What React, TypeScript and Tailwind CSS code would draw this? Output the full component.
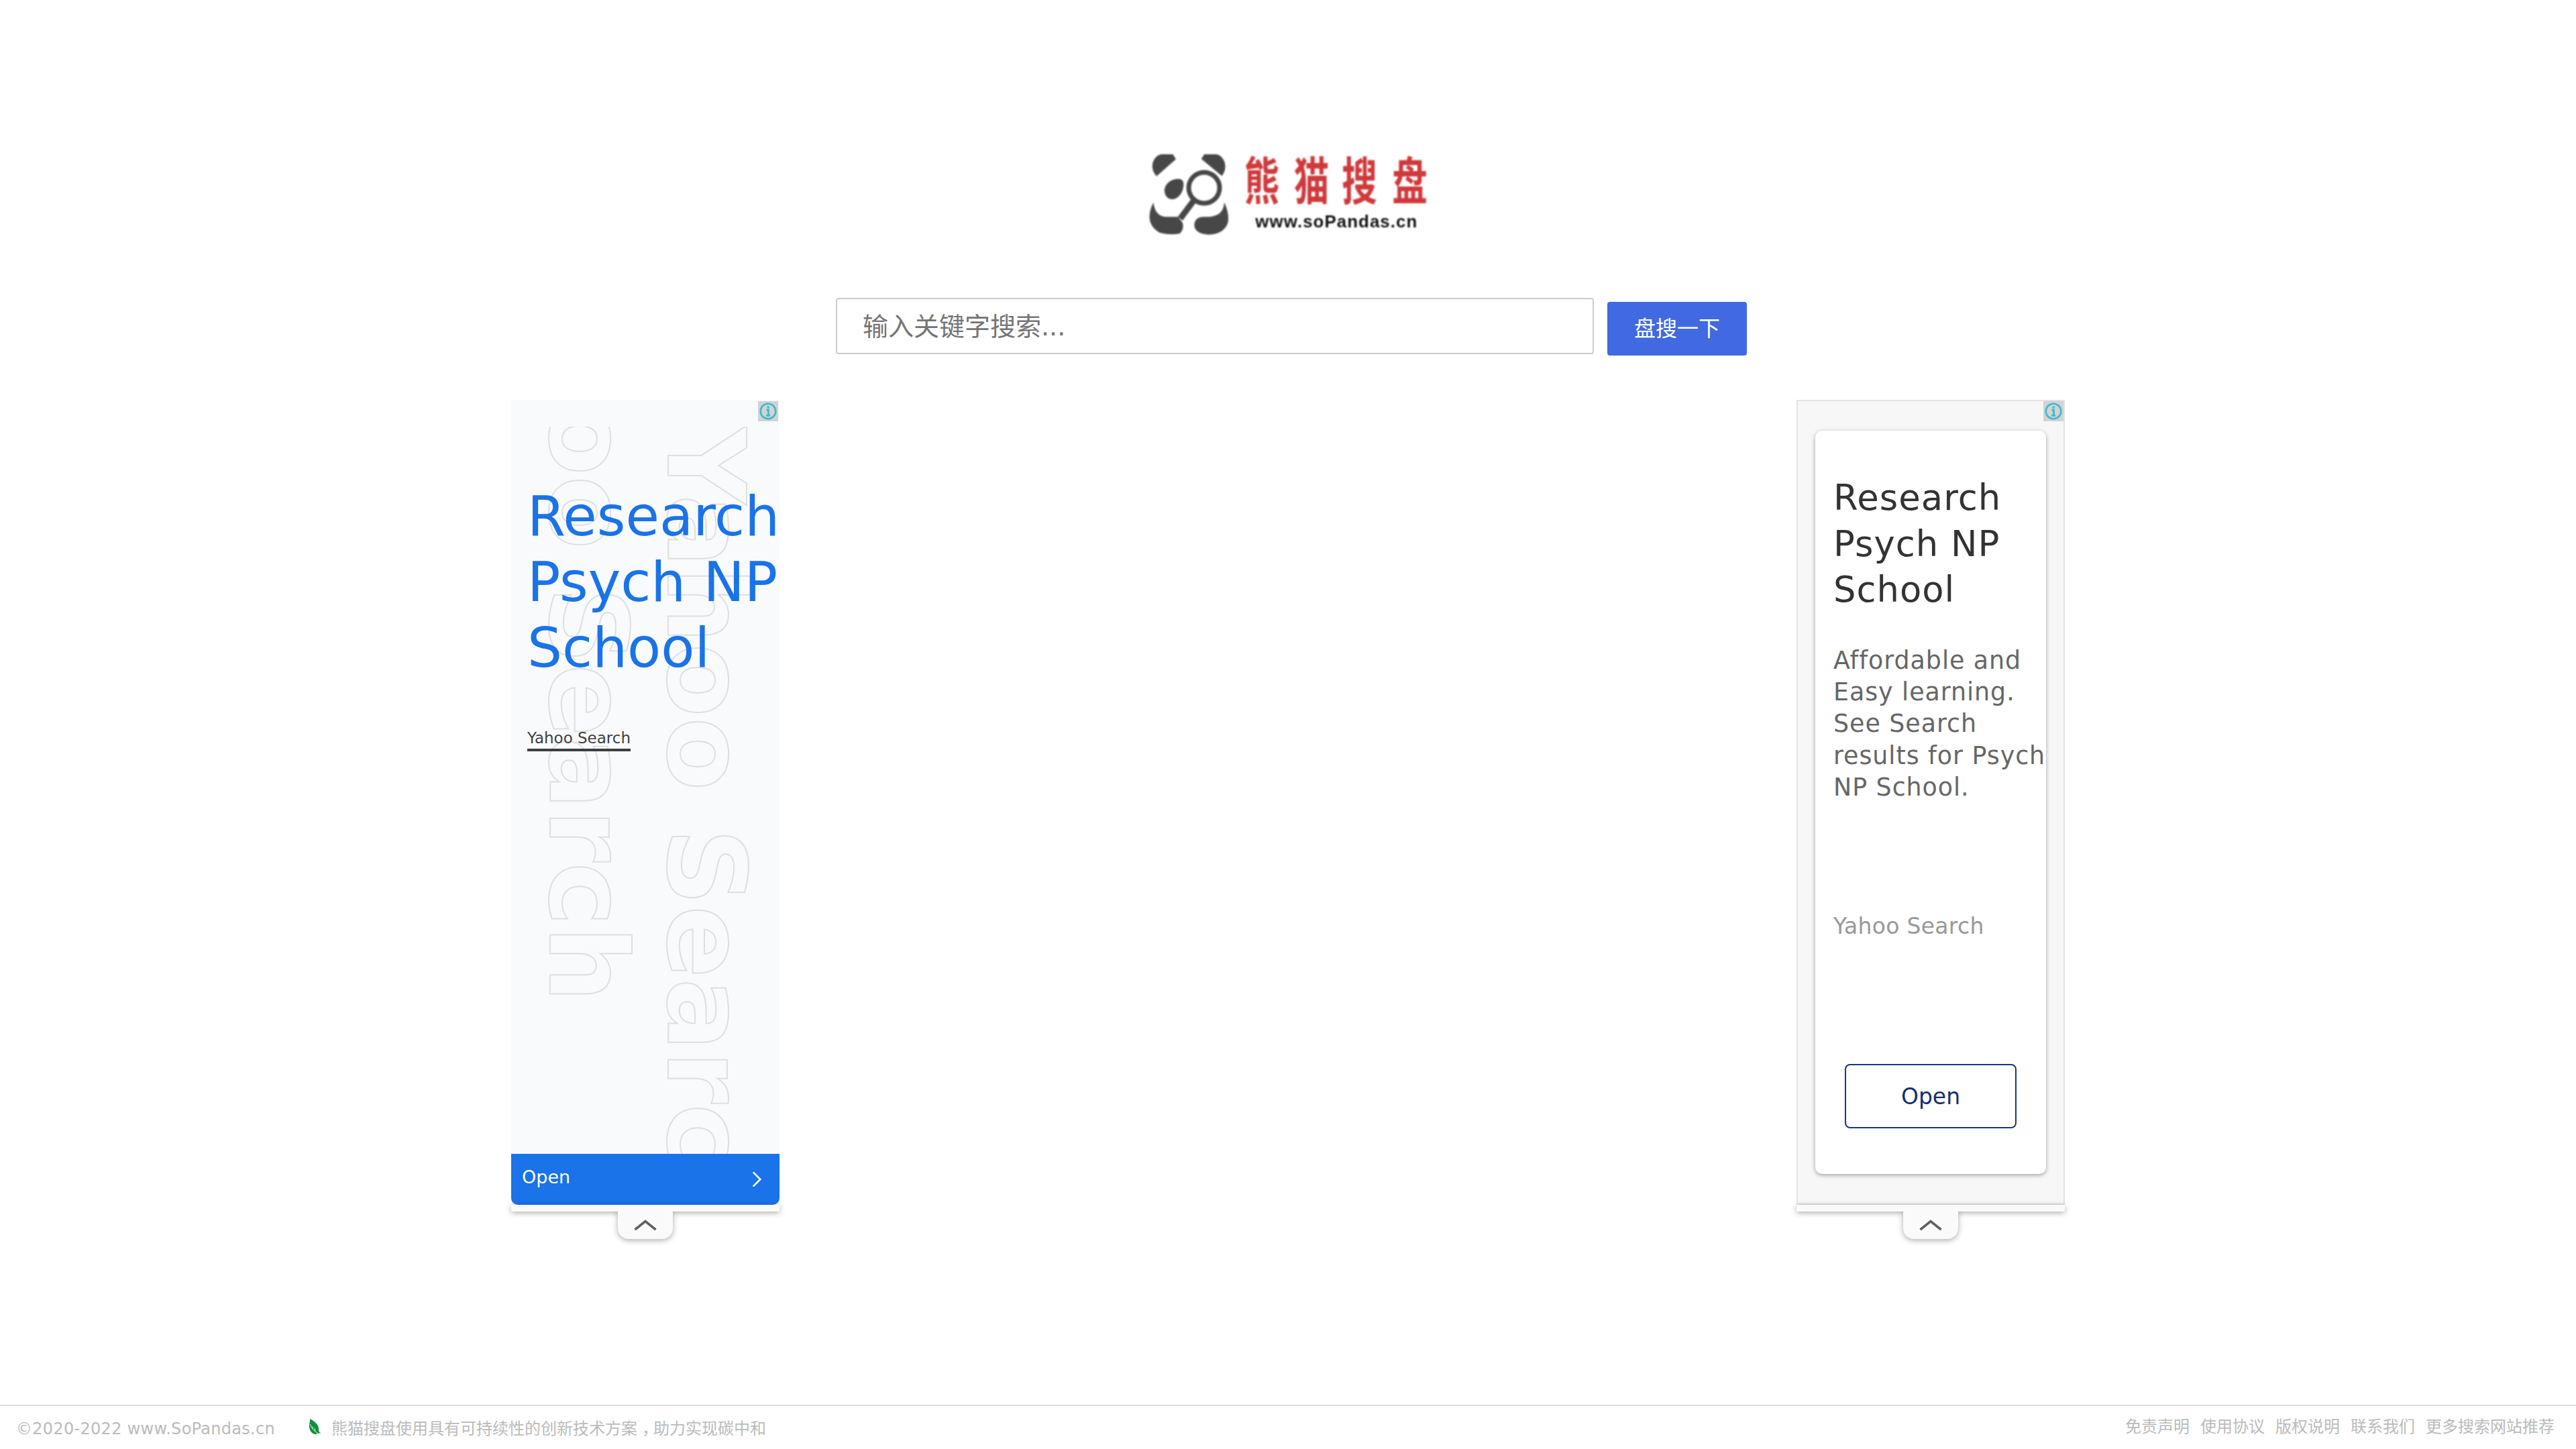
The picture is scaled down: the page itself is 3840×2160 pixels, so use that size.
import React from "react";

function Logo() {
  const glyphs = [
    { char: "熊", x: 603 },
    { char: "猫", x: 825 },
    { char: "搜", x: 1040 },
    { char: "盘", x: 1265 },
  ];
  return (
    <svg viewBox="90 90 1260 360" className="block h-[120px] w-[420px] overflow-visible blur-[0.8px]">
      <g fill="#474747">
        <path d="M132 188C110 165 106 128 128 104C136 96 142 92 152 90H205L219 112Z" />
        <path d="M424 187C442 166 445 134 429 110C422 99 412 93 402 90H346L332 110Z" />
        <path d="M168 257C165 228 192 200 228 200C246 199 253 208 253 225C253 258 231 290 203 291C183 291 170 276 168 257Z" />
        <path d="M118 305C125 352 145 369 180 370H228L242 388C256 400 253 432 235 445Q190 452 150 442C115 424 98 395 101 362C103 337 111 320 118 305Z" />
        <path d="M435 305C450 335 457 372 451 396C443 425 412 450 365 449C326 448 300 432 301 405C302 383 318 370 342 370C398 371 431 358 435 305Z" />
      </g>
      <circle cx="345" cy="240" r="69" fill="none" stroke="#474747" strokeWidth="21" />
      <path d="M302 292L238 378" stroke="#474747" strokeWidth="27" fill="none" />
      <g
        fill="#d0393b"
        fontFamily="'Noto Sans CJK SC', sans-serif"
        fontWeight="700"
        fontSize="229"
        textAnchor="middle"
      >
        {glyphs.map((g) => (
          <text key={g.char} transform={`translate(${g.x} 295) scale(0.69 1)`}>
            {g.char}
          </text>
        ))}
      </g>
      <text
        x="574"
        y="416"
        fill="#111"
        fontFamily="'Liberation Sans', sans-serif"
        fontWeight="700"
        fontSize="75"
        letterSpacing="3"
        textLength="726"
        lengthAdjust="spacingAndGlyphs"
      >
        www.soPandas.cn
      </text>
    </svg>
  );
}

function InfoBadge() {
  return (
    <div className="absolute top-[2px] right-[2px] z-10 size-[30px] bg-[#d2d3d5]">
      <svg viewBox="0 0 30 30" className="block size-[30px]" fill="none" stroke="#3dbccb">
        <circle cx="15" cy="15" r="11.3" strokeWidth="2.6" />
        <path d="M12.5 13H15.5V21M12 21.3H18" strokeWidth="2.8" />
        <path d="M15.2 7.6V10.6" strokeWidth="3.4" />
      </svg>
    </div>
  );
}

function CollapseHandle() {
  return (
    <div className="relative flex flex-col items-center drop-shadow-[0_2px_4px_rgba(0,0,0,0.33)]">
      <div className="h-[10px] w-full bg-[#fafafa]" />
      <div className="flex h-[41px] w-[82px] justify-center rounded-b-[16px] bg-[#fafafa]">
        <svg viewBox="0 0 34 18" className="mt-[11px] h-[18px] w-[34px]" fill="none">
          <path d="M1.5 16L17 3.5L32.5 16" stroke="#616161" strokeWidth="3.6" />
        </svg>
      </div>
    </div>
  );
}

function BlueAd() {
  return (
    <aside className="w-[400px]">
      <div className="relative flex h-[1200px] flex-col bg-[#f9fafc]">
        <InfoBadge />
        {/* Oversized outlined brand name running down behind the headline */}
        <div className="absolute inset-x-0 top-[40px] h-[1084px] overflow-hidden text-[160px] leading-[176px] font-bold whitespace-nowrap text-transparent [-webkit-text-stroke:2px_#dedfe1]">
          <div className="absolute top-0 left-[201px] [writing-mode:vertical-rl]">Yahoo Search</div>
          <div className="absolute top-[-360px] left-[25px] [writing-mode:vertical-rl]">
            Yahoo Search
          </div>
        </div>
        <div className="relative flex grow flex-col items-start pt-[125px] pl-[24px]">
          <h2 className="text-[82px] leading-[98px] whitespace-nowrap text-[#1a73e8]">
            Research
            <br />
            Psych NP
            <br />
            School
          </h2>
          <div className="mt-[71px] border-b-4 border-[#3c4043] pb-[2px] text-[23px] leading-[28px] whitespace-nowrap text-[#3c4043]">
            Yahoo Search
          </div>
        </div>
        <div className="relative flex h-[76px] items-center justify-between rounded-b-[10px] bg-[#1a73e8] pr-[26px] pl-[16px] text-white">
          <span className="-mt-[6px] text-[27px]">Open</span>
          <svg viewBox="0 0 15 24" className="h-[24px] w-[15px]" fill="none">
            <path
              d="M2.5 2.2L12.3 12L2.5 21.8"
              stroke="#fff"
              strokeWidth="2.6"
              strokeLinecap="round"
            />
          </svg>
        </div>
      </div>
      <CollapseHandle />
    </aside>
  );
}

function CardAd() {
  return (
    <aside className="w-[400px]">
      <div className="relative h-[1200px] border-2 border-[#e2e2e2] bg-[#f7f7f7] px-[26px] pt-[44px]">
        <div className="absolute -top-[2px] -right-[2px]">
          <InfoBadge />
        </div>
        <div className="flex h-[1108px] flex-col rounded-[10px] bg-white pt-[66px] pl-[27px] whitespace-nowrap shadow-[0_2px_6px_rgba(0,0,0,0.35)]">
          <h2 className="text-[52.8px] leading-[68.7px] tracking-[1px] text-[#333]">
            Research
            <br />
            Psych NP
            <br />
            School
          </h2>
          <p className="mt-[46.5px] text-[36.4px] leading-[47.4px] tracking-[0.95px] text-[#666]">
            Affordable and
            <br />
            Easy learning.
            <br />
            See Search
            <br />
            results for Psych
            <br />
            NP School.
          </p>
          <div className="mt-[161.5px] text-[33px] leading-[44px] tracking-[0.3px] text-[#999]">
            Yahoo Search
          </div>
          <div className="mt-[183px] ml-[17px] flex h-[96px] w-[256px] items-center justify-center rounded-[8px] border-2 border-[#15397a] pt-[2px] text-[33px] text-[#142f6b]">
            Open
          </div>
        </div>
      </div>
      <CollapseHandle />
    </aside>
  );
}

function SearchBar() {
  return (
    <div className="mt-[94px] flex pl-[1246px]">
      <input
        type="text"
        placeholder="输入关键字搜索..."
        className="h-[84px] w-[1130px] rounded-[4px] border-2 border-[#ccc] pt-[2px] pl-[38px] text-[38px] outline-none placeholder:text-[#757575]"
      />
      <button className="mt-[6px] ml-[20px] h-[80px] w-[208px] rounded-[4px] bg-[#4169e1] text-[32px] text-white">
        盘搜一下
      </button>
    </div>
  );
}

function Footer() {
  const links = ["免责声明", "使用协议", "版权说明", "联系我们", "更多搜索网站推荐"];
  return (
    <footer className="flex h-[66px] justify-between border-t-2 border-[#ddd] pr-[32px] pl-[24px] text-[24px] leading-[28px] whitespace-nowrap text-[#bbb]">
      <div className="flex pt-[20px]">
        <span className="tracking-[0.29px]">©2020-2022 www.SoPandas.cn</span>
        <svg viewBox="0 0 20 24" className="mt-[-1px] ml-[50px] h-[24px] w-[20px]">
          <path d="M2 0C9 4 15 8 15 15C15 18 15 20 19 21.5L15 21.5L10 23C4 22 1 17 1 10C1 6 2.5 4 2 0Z" fill="#0b9138" />
          <path d="M2.5 8Q5 17 14 21.5M6 15V11.5M9.5 18.5V14" stroke="#fff" strokeWidth="0.9" fill="none" />
        </svg>
        <span className="ml-[14px]">
          熊猫搜盘使用具有可持续性的创新技术方案
          <span className="relative left-[7px]">，</span>
          助力实现碳中和
        </span>
      </div>
      <nav className="flex gap-4 pt-[17px]">
        {links.map((l) => (
          <a key={l}>{l}</a>
        ))}
      </nav>
    </footer>
  );
}

export default function App() {
  return (
    <div className="flex h-[2160px] w-[3840px] flex-col overflow-hidden bg-white font-['DejaVu_Sans','Noto_Sans_CJK_SC',sans-serif]">
      <header className="pt-[230px]">
        <div className="flex justify-center">
          <Logo />
        </div>
        <SearchBar />
      </header>
      <main className="flex grow justify-between px-[762px] pt-[66px]">
        <BlueAd />
        <CardAd />
      </main>
      <Footer />
    </div>
  );
}
